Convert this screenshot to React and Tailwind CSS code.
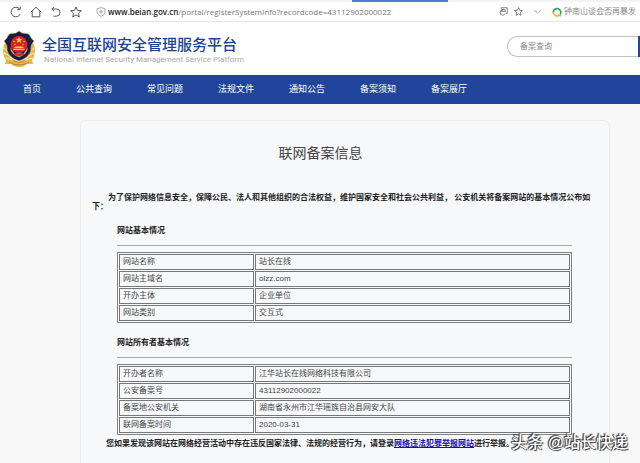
import React from 'react'

const navItems = ['首页', '公共查询', '常见问题', '法规文件', '通知公告', '备案须知', '备案展厅']

const siteInfo = [
  ['网站名称', '站长在线'],
  ['网站主域名', 'olzz.com'],
  ['开办主体', '企业单位'],
  ['网站类别', '交互式'],
]

const ownerInfo = [
  ['开办者名称', '江华站长在线网络科技有限公司'],
  ['公安备案号', '43112902000022'],
  ['备案地公安机关', '湖南省永州市江华瑶族自治县网安大队'],
  ['联网备案时间', '2020-03-31'],
]

function Icon({ size = 12, children, ...rest }) {
  return (
    <svg width={size} height={size} viewBox="0 0 12 12" fill="none" stroke="currentColor" strokeWidth="1" aria-hidden="true" {...rest}>
      {children}
    </svg>
  )
}

const starPath = 'M6 .9 7.5 4.4 11.3 4.7 8.4 7.2 9.3 11 6 9 2.7 11 3.6 7.2 .7 4.7 4.5 4.4Z'

function BrowserBar() {
  return (
    <div>
      <div className="flex h-0.5 bg-[#f3f3f3]">
        <div className="ml-[55%] w-[15%] bg-[#3f83d8]" />
      </div>
      <div className="flex h-5 items-center border-b border-[#e6e6e6] bg-white pl-2.5 text-[#555]">
        <div className="flex items-center gap-2">
          <button type="button" aria-label="刷新">
            <Icon>
              <path d="M10.3 8A4.8 4.8 0 1 1 9.6 2.9" />
              <path d="M10.2 .6V3.4H7.4" />
            </Icon>
          </button>
          <button type="button" aria-label="主页">
            <Icon><path d="M.8 6.2 6 1.2 11.2 6.2M2.2 5.2V10.8H9.8V5.2" /></Icon>
          </button>
          <button type="button" aria-label="后退">
            <Icon><path d="M4 .8 1.8 3 4 5.2M2 3H6.4A3.6 3.6 0 0 1 6.4 10.2H3.5" /></Icon>
          </button>
          <button type="button" aria-label="收藏">
            <Icon><path d={starPath} /></Icon>
          </button>
        </div>
        <Icon size={10} className="ml-3.5 shrink-0 text-[#999]">
          <path d="M6 .8 10.7 2V6.5Q10.4 9.6 6 11.3 1.6 9.6 1.3 6.5V2Z" />
          <path d="M6 3.5V8.3M3.6 5.9H8.4" />
        </Icon>
        <p className="ml-0.5 flex-1 truncate font-['Open_Sans',sans-serif] text-[8px] leading-3 text-[#777]">
          <span className="font-semibold text-[#222]">www.beian.gov.cn</span>
          /portal/registerSystemInfo?recordcode=43112902000022
        </p>
        <button type="button" aria-label="切换内核">
          <Icon size={9}>
            <path d="M3 3V1H11V8.5H9.5M3 5.8H8.8Q8.6 3.3 6 3.1 2.6 3 1.6 6.5 1 10.8 4.6 10.8 7.4 10.8 8.4 8.5M3 5.8Q4 4 6.5 3" />
          </Icon>
        </button>
        <button type="button" aria-label="加入收藏夹" className="ml-1.5">
          <Icon size={9}><path d={starPath} /></Icon>
        </button>
        <button type="button" aria-label="展开" className="ml-2.5">
          <Icon size={9} className="text-[#888]"><path d="M1.5 4.2 6 8 10.5 4.2" /></Icon>
        </button>
        <svg className="ml-2.5 shrink-0" width="10" height="10" viewBox="0 0 12 12" fill="none" strokeWidth="2" aria-hidden="true">
          <path d="M9.6 9.1A4.5 4.5 0 1 0 1.5 6.5" stroke="#2ca262" />
          <path d="M1.5 6A4.5 4.5 0 0 0 8.8 9.6L11 11" stroke="#eeb43c" />
        </svg>
        <span className="ml-0.5 mr-1 text-[8px] leading-3 text-[#8c8c8c]">钟南山谈会否再暴发</span>
      </div>
    </div>
  )
}

function Emblem() {
  return (
    <svg width="34" height="38" viewBox="0 0 34 38" className="shrink-0" aria-hidden="true">
      {/* wheat wreath */}
      <path d="M4 10Q-2 22 4 30L3 34 9 34Q12 37 17 37T25 34L31 34 30 30Q36 22 30 10L26 28 17 32 8 28Z" fill="#e3b84c" />
      <path d="M2 18 7 22M2 23 8 26M4 28 10 30M32 18 27 22M32 23 26 26M30 28 24 30" stroke="#fff0ac" strokeWidth="1" />
      <path d="M7 32Q17 38 27 32M11 31Q17 34 23 31" stroke="#b98632" fill="none" />
      {/* shield */}
      <path d="M17 1Q20 4 25 3.5 28 4 29 8L32 11Q28 15 29 20 27 28 17 31 7 28 5 20 6 15 2 11L5 8Q6 4 9 3.5 14 4 17 1Z" fill="#191a4c" stroke="#d8a83b" strokeWidth=".6" />
      <path d="M8 17Q9 25 17 27 25 25 26 17L22 23H12Z" fill="#e5b643" />
      <circle cx="17" cy="14.5" r="8.4" fill="#d8261f" />
      <path d="m17 7 .9 2 2.2.2-1.7 1.4.5 2.1-1.9-1.1-1.9 1.1.5-2.1-1.7-1.4 2.2-.2Z" fill="#ffd858" />
      <g fill="#ffc94f">
        <circle cx="12" cy="11.5" r=".8" />
        <circle cx="22" cy="11.5" r=".8" />
        <circle cx="13" cy="14.5" r=".7" />
        <circle cx="21" cy="14.5" r=".7" />
        <path d="M12 18H22L20.5 16.5H13.5ZM11.5 18.7H22.5V20H11.5Z" />
      </g>
      <path d="M12 22.5Q17 24.5 22 22.5V25Q17 27 12 25Z" fill="#c8281e" />
    </svg>
  )
}

function Header() {
  return (
    <header className="flex h-[53px] items-center bg-white pl-0.5">
      <Emblem />
      <div className="ml-1.5 mt-1 flex-1">
        <h1 className="text-[15px] font-medium leading-[18px] text-[#20438f]">全国互联网安全管理服务平台</h1>
        <p className="pl-0.5 font-['Roboto',sans-serif] text-[8px] leading-3 text-[#aaa]">
          National Internet Security Management Service Platform
        </p>
      </div>
      <form className="flex h-[21px] -mt-1" onSubmit={(e) => e.preventDefault()}>
        <input
          type="text"
          aria-label="备案查询"
          placeholder="备案查询"
          className="w-[131px] rounded-l-full border border-r-0 border-[#c3c3c3] bg-white pl-3 text-[8px] text-[#555] outline-none placeholder:text-[#888]"
        />
        <button type="submit" aria-label="查询" className="w-0.5 bg-[#20459b]" />
      </form>
    </header>
  )
}

function InfoTable({ title, rows }) {
  return (
    <section className="mt-3.5">
      <h3 className="font-bold leading-3 text-[#222]">{title}</h3>
      <hr className="mt-2 border-[#aaa]" />
      <table className="mt-1.5 w-full table-fixed border-separate border-spacing-px border border-[#808080] text-[#444]">
        <tbody>
          {rows.map(([label, value]) => (
            <tr key={label}>
              <th scope="row" className="w-[30%] border border-[#777] px-[3px] py-0 text-left font-normal leading-[14px]">{label}</th>
              <td className="border border-[#777] px-[3px] py-0 leading-[14px]">{value}</td>
            </tr>
          ))}
        </tbody>
      </table>
    </section>
  )
}

export default function App() {
  return (
    <div lang="zh-CN" className="relative flex min-h-screen flex-col bg-[#f8f8f8] font-['Liberation_Sans','Noto_Sans_CJK_SC',sans-serif]">
      <BrowserBar />
      <Header />
      <nav className="flex h-[29px] items-center gap-[35px] bg-[#20459b] pl-[23px] text-[9px] text-white">
        {navItems.map((item) => (
          <a key={item} href="#">{item}</a>
        ))}
      </nav>

      <main className="ml-20 mr-[30px] mt-4 flex-1 rounded-t-md border border-b-0 border-[#ebebed] bg-[#f7f8fa] pl-[11px] pr-4 pt-5 text-[8px]">
        <h2 className="pr-11 text-center text-[14px] leading-6 text-[#444]">联网备案信息</h2>
        <p className="mt-7 indent-4 font-bold leading-[9px] text-[#222]">
          为了保护网络信息安全，保障公民、法人和其他组织的合法权益，维护国家安全和社会公共利益， 公安机关将备案网站的基本情况公布如下：
        </p>
        <div className="pl-[25px] pr-[21px]">
          <InfoTable title="网站基本情况" rows={siteInfo} />
          <InfoTable title="网站所有者基本情况" rows={ownerInfo} />
        </div>
        <p className="mt-[3px] pl-3.5 font-bold leading-3 text-[#222]">
          您如果发现该网站在网络经营活动中存在违反国家法律、法规的经营行为，请登录
          <a href="#" className="text-[#1a0dab] underline">网络违法犯罪举报网站</a>
          进行举报。
        </p>
      </main>

      <div className="absolute bottom-2 right-3 text-[16px] font-medium leading-6 text-white [text-shadow:-1px_-1px_1px_#333,1px_1px_1px_#333,-1px_0_0_#555]">
        头条 @站长快递
      </div>
    </div>
  )
}
